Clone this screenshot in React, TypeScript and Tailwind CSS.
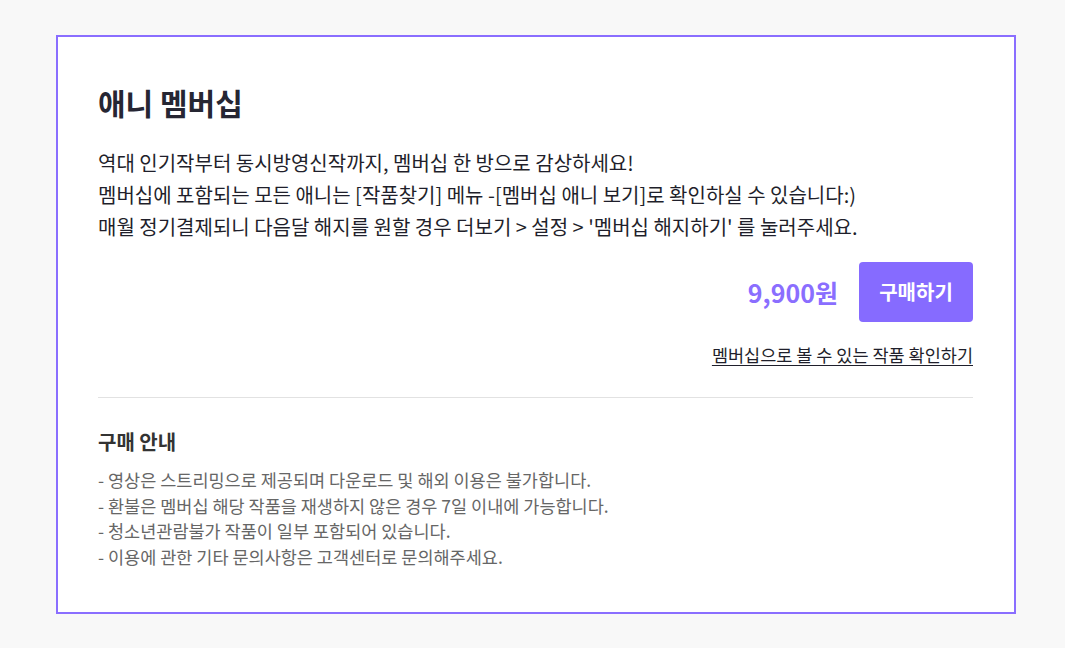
import React, { FC } from "react";

const font = {
  fontFamily: '"Noto Sans CJK KR", "Noto Sans", sans-serif',
};

const notices = [
  "- 영상은 스트리밍으로 제공되며 다운로드 및 해외 이용은 불가합니다.",
  "- 환불은 멤버십 해당 작품을 재생하지 않은 경우 7일 이내에 가능합니다.",
  "- 청소년관람불가 작품이 일부 포함되어 있습니다.",
  "- 이용에 관한 기타 문의사항은 고객센터로 문의해주세요.",
];

export const MembershipCard: FC = () => {
  return (
    <section className="w-[960px] border-2 border-[#8a6eff] bg-white pl-[40px] pr-[41px] pt-[45px] pb-[42px]">
      <h1 className="text-[30px] leading-[40px] font-bold text-[#262633]">애니 멤버십</h1>
      <div className="mt-[25px] text-[20px] leading-[32px] text-[#1f1f2b]">
        <p>역대 인기작부터 동시방영신작까지, 멤버십 한 방으로 감상하세요!</p>
        <p>멤버십에 포함되는 모든 애니는 [작품찾기] 메뉴 -[멤버십 애니 보기]로 확인하실 수 있습니다:)</p>
        <p>매월 정기결제되니 다음달 해지를 원할 경우 더보기 &gt; 설정 &gt; '멤버십 해지하기' 를 눌러주세요.</p>
      </div>
      <div className="mt-[19px] flex items-center justify-end gap-[21px]">
        <span className="text-[25px] leading-[32px] font-bold text-[#8a6eff]">9,900원</span>
        <button className="h-[60px] w-[114px] rounded-[4px] bg-[#866bff] text-[20px] font-bold text-white">
          구매하기
        </button>
      </div>
      <div className="mt-[20px] flex justify-end">
        <a className="text-[17.5px] leading-[26px] text-[#1f1f2b] underline underline-offset-[3px]">
          멤버십으로 볼 수 있는 작품 확인하기
        </a>
      </div>
      <div className="mt-[29px] h-px bg-[#e2e2e2]" />
      <h2 className="mt-[31px] text-[20px] leading-[26px] font-bold text-[#333]">구매 안내</h2>
      <ul className="mt-[12px] text-[17.5px] leading-[25.7px] text-[#666]">
        {notices.map((n) => (
          <li key={n}>{n}</li>
        ))}
      </ul>
    </section>
  );
};

export default function App() {
  return (
    <div className="min-h-[648px] bg-[#f8f8f8] pl-[56px] pt-[35px]" style={font}>
      <MembershipCard />
    </div>
  );
}
